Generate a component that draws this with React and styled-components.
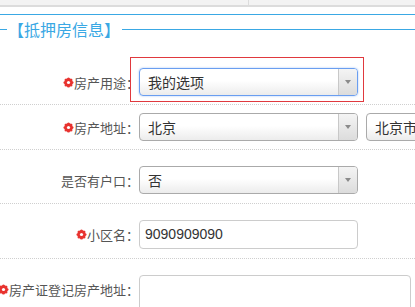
import React from "react";
import styled, { createGlobalStyle } from "styled-components";

const Global = createGlobalStyle`
  html, body { margin: 0; padding: 0; background: #fff; }
  body { font-family: "Noto Sans CJK SC", "Liberation Sans", sans-serif; overflow: hidden; }
`;

const Page = styled.div`
  width: 415px;
  height: 307px;
  overflow: hidden;
  background: #fff;
`;

const TabBar = styled.div`
  display: flex;
  height: 5px;
  background: #f3f3f3;
  border-bottom: 2px solid #dcdcdc;
`;

const TabCell = styled.div`
  width: ${(p) => p.$w};
  flex: ${(p) => (p.$grow ? 1 : "none")};
  border-right: ${(p) => (p.$grow ? "none" : "1px solid #dcdcdc")};
`;

const Panel = styled.div`
  margin-top: 7px;
  border-top: 1px solid #3aa8e4;
`;

const Legend = styled.div`
  display: flex;
  align-items: center;
  height: 24px;
  margin-top: 2px;
`;

const LegendLine = styled.div`
  height: 1px;
  background: #3aa8e4;
  width: ${(p) => p.$w || "auto"};
  flex: ${(p) => (p.$grow ? 1 : "none")};
`;

const LegendText = styled.div`
  color: #3aa8e4;
  font-size: 16px;
  line-height: 24px;
  padding: 0 2px 0 1px;
`;

const Form = styled.div`
  margin-top: 19px;
`;

const Row = styled.div`
  display: flex;
  align-items: flex-start;
  padding: ${(p) => (p.$loose ? "16px 0 9px" : "8px 0 8px")};
  border-bottom: ${(p) => (p.$last ? "none" : "1px dotted #cfcfcf")};
`;

const Label = styled.div`
  width: 139px;
  flex: none;
  display: flex;
  justify-content: flex-end;
  align-items: center;
  height: 28px;
  font-size: 13px;
  color: #555;
  white-space: nowrap;
`;

const Star = styled.svg`
  width: 11px;
  height: 11px;
  margin-right: 0px;
  flex: none;
`;

const Field = styled.div`
  position: relative;
  display: flex;
  gap: 8px;
`;

const ErrorFrame = styled.div`
  position: absolute;
  left: -9px;
  top: -11px;
  width: 232px;
  height: 43px;
  border: 1px solid #e0393e;
  pointer-events: none;
`;

const Select = styled.div`
  width: ${(p) => p.$w || "219px"};
  height: 28px;
  box-sizing: border-box;
  flex: none;
  display: flex;
  border: 1px solid ${(p) => (p.$focus ? "#6a9ef0" : "#aaa")};
  border-radius: 4px;
  background: linear-gradient(#ffffff 0%, #ffffff 45%, #ececec 100%);
  box-shadow: ${(p) => (p.$focus ? "0 0 2px rgba(90,150,240,0.6)" : "none")};
  overflow: hidden;
`;

const SelectText = styled.div`
  flex: 1;
  padding-left: 8px;
  font-size: 14px;
  line-height: 26px;
  color: #333;
  white-space: nowrap;
`;

const Arrow = styled.div`
  width: 18px;
  display: ${(p) => (p.$hide ? "none" : "flex")};
  align-items: center;
  justify-content: center;
  border-left: 1px solid #c8c8c8;
  background: linear-gradient(#f4f4f4, #dcdcdc);
  &::after {
    content: "";
    border-left: 3px solid transparent;
    border-right: 3px solid transparent;
    border-top: 4px solid #8a8a8a;
  }
`;

const Input = styled.div`
  width: 219px;
  height: 29px;
  box-sizing: border-box;
  border: 1px solid #ccc;
  border-radius: 4px;
  padding-left: 5px;
  font-family: "Liberation Sans", "Noto Sans CJK SC", sans-serif;
  font-size: 14px;
  line-height: 27px;
  color: #333;
`;

const TextArea = styled.div`
  width: 272px;
  height: 60px;
  box-sizing: border-box;
  border: 1px solid #ccc;
  border-radius: 4px;
`;

function RequiredStar() {
  const petals = [];
  for (let i = 0; i < 8; i++) {
    const a = (i * Math.PI) / 4;
    petals.push(<circle key={i} cx={5.5 + Math.cos(a) * 3.4} cy={5.5 + Math.sin(a) * 3.4} r={1.6} fill="#e8332f" />);
  }
  return (
    <Star viewBox="0 0 11 11">
      <circle cx="5.5" cy="5.5" r="3.7" fill="#e8332f" />
      {petals}
      <circle cx="5.5" cy="5.5" r="1.6" fill="#fff" />
    </Star>
  );
}

export default function App() {
  return (
    <Page>
      <Global />
      <TabBar>
        <TabCell $w="248px" />
        <TabCell $grow />
      </TabBar>
      <Panel>
        <Legend>
          <LegendLine $w="7px" />
          <LegendText>【抵押房信息】</LegendText>
          <LegendLine $grow />
        </Legend>
        <Form>
          <Row>
            <Label><RequiredStar />房产用途：</Label>
            <Field>
              <ErrorFrame />
              <Select $focus>
                <SelectText>我的选项</SelectText>
                <Arrow />
              </Select>
            </Field>
          </Row>
          <Row>
            <Label><RequiredStar />房产地址：</Label>
            <Field>
              <Select>
                <SelectText>北京</SelectText>
                <Arrow />
              </Select>
              <Select $w="120px">
                <SelectText>北京市</SelectText>
                <Arrow $hide />
              </Select>
            </Field>
          </Row>
          <Row $loose>
            <Label>是否有户口：</Label>
            <Field>
              <Select>
                <SelectText>否</SelectText>
                <Arrow />
              </Select>
            </Field>
          </Row>
          <Row $loose>
            <Label><RequiredStar />小区名：</Label>
            <Field>
              <Input>9090909090</Input>
            </Field>
          </Row>
          <Row $loose $last>
            <Label><RequiredStar />房产证登记房产地址：</Label>
            <Field>
              <TextArea />
            </Field>
          </Row>
        </Form>
      </Panel>
    </Page>
  );
}
